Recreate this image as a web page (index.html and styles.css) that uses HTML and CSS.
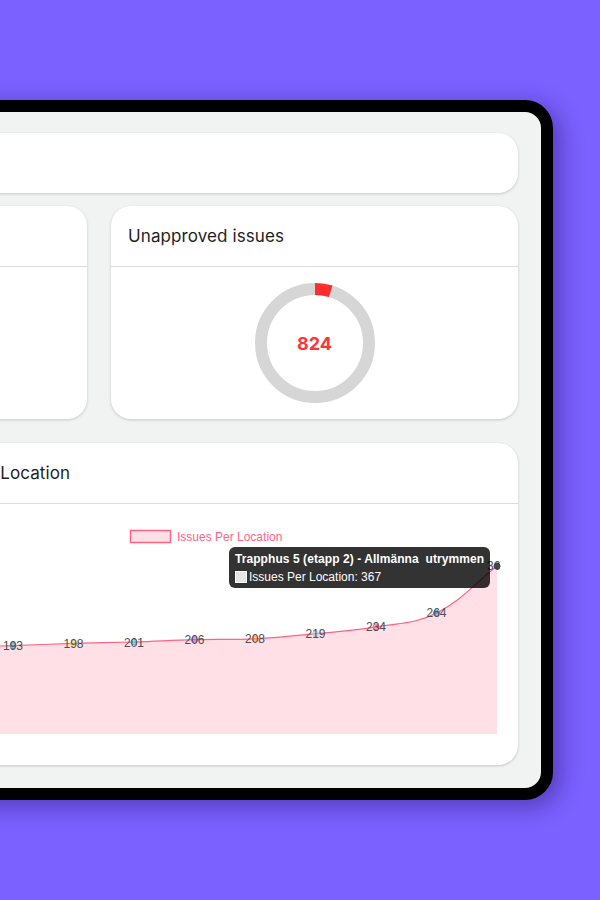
FILE: index.html
```html
<!DOCTYPE html>
<html lang="sv">
<head>
<meta charset="utf-8">
<title>Dashboard</title>
<link rel="stylesheet" href="styles.css">
</head>
<body>
<div class="stage">
  <div class="device">
    <div class="card topbar"></div>

    <div class="row">
      <div class="card">
        <div class="card-head"></div>
        <div class="card-body"></div>
      </div>
      <div class="card">
        <div class="card-head">Unapproved issues</div>
        <div class="card-body donut-body">
          <div class="donut">
            <svg width="120" height="120" viewBox="0 0 120 120">
              <circle cx="60" cy="60" r="54" fill="none" stroke="#d6d6d6" stroke-width="12"/>
              <circle cx="60" cy="60" r="54" fill="none" stroke="#ff2e2e" stroke-width="12"
                      stroke-dasharray="16 340" transform="rotate(-90 60 60)"/>
            </svg>
            <span class="donut-value">824</span>
          </div>
        </div>
      </div>
    </div>

    <div class="bottom-row">
      <div class="card side-card"></div>
      <div class="card chart-card">
        <div class="card-head">Issues Per Location</div>
        <div class="card-body chart-body">
          <svg class="chart" width="602" height="261" viewBox="219 0 602 261">
            <g class="legend">
              <rect x="450.5" y="26.5" width="40" height="12" fill="#ffe0e6" stroke="#ff6384" stroke-width="1.5"/>
              <text x="497" y="37" class="legend-text">Issues Per Location</text>
            </g>
            <path class="area" d="M272.5,143 C296.7,142.7 308.8,142.3 333,141.6 C357.2,140.9 369.3,140.1 393.5,139.4 C417.7,138.7 429.8,138.7 454,138 C478.2,137.3 490.3,136.3 514.5,135.7 C538.7,135.1 550.8,136 575,134.8 C599.2,133.6 611.3,132.1 635.5,129.7 C659.7,127.3 672,127 696,122.9 C720.4,118.7 734.9,120 756.5,109.1 C783.2,95.6 792.8,80.8 817,62 L817,230 L272.5,230 Z"/>
            <path class="line" d="M272.5,143 C296.7,142.7 308.8,142.3 333,141.6 C357.2,140.9 369.3,140.1 393.5,139.4 C417.7,138.7 429.8,138.7 454,138 C478.2,137.3 490.3,136.3 514.5,135.7 C538.7,135.1 550.8,136 575,134.8 C599.2,133.6 611.3,132.1 635.5,129.7 C659.7,127.3 672,127 696,122.9 C720.4,118.7 734.9,120 756.5,109.1 C783.2,95.6 792.8,80.8 817,62"/>
            <g class="dots">
              <circle cx="333" cy="141.6" r="3" fill="rgba(54,162,235,.5)" stroke="#36a2eb"/>
              <circle cx="393.5" cy="139.4" r="3" fill="rgba(255,205,86,.5)" stroke="#ffcd56"/>
              <circle cx="454" cy="138" r="3" fill="rgba(75,192,192,.5)" stroke="#4bc0c0"/>
              <circle cx="514.5" cy="135.7" r="3" fill="rgba(153,102,255,.5)" stroke="#9966ff"/>
              <circle cx="575" cy="134.8" r="3" fill="rgba(255,159,64,.5)" stroke="#ff9f40"/>
              <circle cx="635.5" cy="129.7" r="3" fill="rgba(201,203,207,.5)" stroke="#c9cbcf"/>
              <circle cx="696" cy="122.9" r="3" fill="rgba(255,99,132,.5)" stroke="#ff6384"/>
              <circle cx="756.5" cy="109.1" r="3" fill="rgba(54,162,235,.5)" stroke="#36a2eb"/>
              <circle cx="817" cy="62" r="3" fill="#444" stroke="#333"/>
            </g>
            <g class="labels">
              <text x="333" y="146">193</text>
              <text x="393.5" y="144">198</text>
              <text x="454" y="142.5">201</text>
              <text x="514.5" y="140">206</text>
              <text x="575" y="139">208</text>
              <text x="635.5" y="134">219</text>
              <text x="696" y="127">234</text>
              <text x="756.5" y="113">264</text>
              <text x="817" y="66">367</text>
            </g>
          </svg>
          <div class="tooltip">
            <div class="tt-title">Trapphus 5 (etapp 2) - Allmänna  utrymmen</div>
            <div class="tt-body"><span class="tt-box"></span>Issues Per Location: 367</div>
          </div>
        </div>
      </div>
    </div>
  </div>
</div>
</body>
</html>
```

FILE: styles.css
```css
* { box-sizing: border-box; }

html, body {
  margin: 0;
  padding: 0;
  height: 900px;
  overflow: hidden;
  background: #7b61ff;
  font-family: Inter, Roboto, "Noto Sans", sans-serif;
}

.stage {
  display: flex;
  justify-content: flex-end;
  padding: 100px 47px 0 0;
  height: 900px;
}

.device {
  flex: 0 0 907px;
  height: 700px;
  border: 12px solid #000;
  border-radius: 28px;
  background: #f1f2f2;
  padding: 21px 23px 23px 22px;
  display: flex;
  flex-direction: column;
  box-shadow: 6px 6px 24px rgba(30, 10, 90, 0.45);
}

.card {
  background: #fff;
  border-radius: 20px;
  box-shadow: 0 1px 3px rgba(0, 0, 0, 0.18);
}

.topbar {
  height: 60px;
  flex: 0 0 60px;
  margin-bottom: 13px;
}

.row {
  display: grid;
  grid-template-columns: 1fr 1fr;
  gap: 24px;
  height: 213px;
  flex: 0 0 213px;
  margin-bottom: 24px;
}

.row .card {
  display: flex;
  flex-direction: column;
}

.card-head {
  height: 61px;
  flex: 0 0 61px;
  border-bottom: 1px solid #dcdcdc;
  padding-left: 17px;
  display: flex;
  align-items: center;
  font-size: 17px;
  color: #1e1e1e;
  letter-spacing: 0.1px;
  white-space: nowrap;
}

.card-body {
  flex: 1;
}

.donut-body {
  display: flex;
  align-items: center;
  justify-content: center;
}

.donut {
  position: relative;
  width: 120px;
  height: 120px;
  display: flex;
  align-items: center;
  justify-content: center;
}

.donut svg {
  display: block;
  position: absolute;
  left: 0;
  top: 0;
}

.donut-value {
  position: relative;
  font-size: 18px;
  font-weight: 700;
  color: #ff3434;
  margin-top: 1px;
}

.bottom-row {
  flex: 0 0 322px;
  display: grid;
  grid-template-columns: 1fr 619px;
  gap: 24px;
}

.chart-card {
  display: flex;
  flex-direction: column;
}

.chart-card .card-head {
  padding-left: 12px;
}

.chart-body {
  position: relative;
}

.chart {
  display: block;
  overflow: hidden;
}

.area {
  fill: #ffe0e6;
}

.line {
  fill: none;
  stroke: #ff6384;
  stroke-width: 1.2;
}

.labels text {
  font-family: "Liberation Sans", Arial, sans-serif;
  font-size: 12px;
  fill: #4d4d4d;
  text-anchor: middle;
}

.legend-text {
  font-family: "Liberation Sans", Arial, sans-serif;
  font-size: 12px;
  fill: #ff6384;
}

.tooltip {
  position: absolute;
  left: 330px;
  top: 43px;
  background: rgba(0, 0, 0, 0.8);
  border-radius: 6px;
  padding: 6px 6px 5px 6px;
  color: #fff;
  font-family: "Liberation Sans", Arial, sans-serif;
  font-size: 12px;
  line-height: 12px;
}

.tt-title {
  font-weight: 700;
  white-space: pre;
  margin-bottom: 6px;
  letter-spacing: 0.07px;
}

.tt-body {
  display: flex;
  align-items: center;
  white-space: pre;
}

.tt-box {
  width: 12px;
  height: 12px;
  background: #e6e6e6;
  border: 1px solid #fff;
  margin-right: 2px;
}
```
